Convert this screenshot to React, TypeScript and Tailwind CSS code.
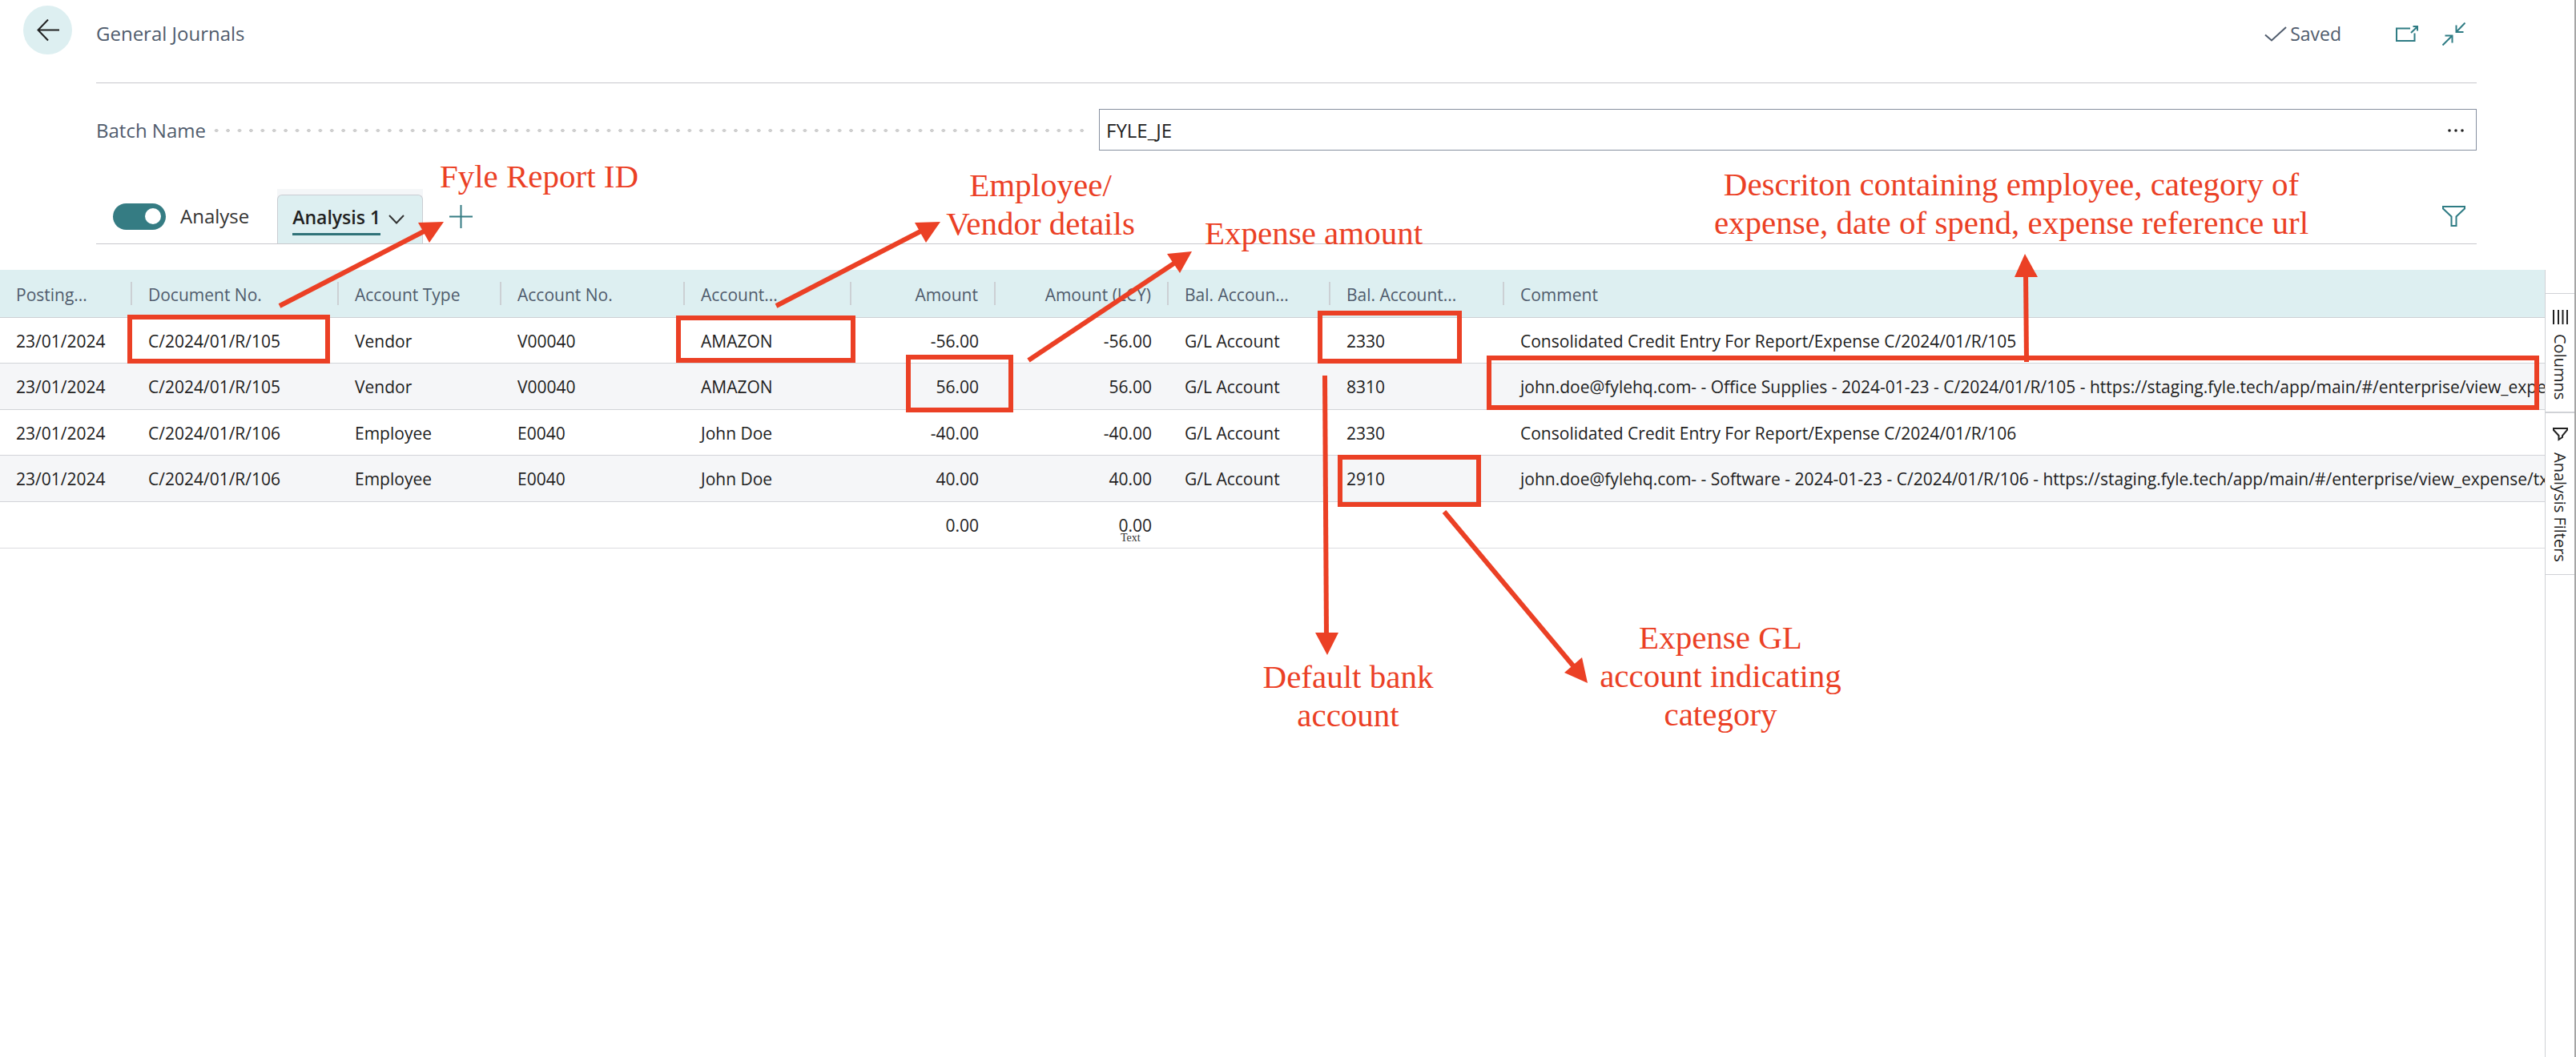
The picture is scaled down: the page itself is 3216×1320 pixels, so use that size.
const COLUMNS = [
  { label: 'Posting...', width: 'w-[165px]', right: false },
  { label: 'Document No.', width: 'w-[258px]', right: false },
  { label: 'Account Type', width: 'w-[203px]', right: false },
  { label: 'Account No.', width: 'w-[229px]', right: false },
  { label: 'Account...', width: 'w-[208px]', right: false },
  { label: 'Amount', width: 'w-[180px]', right: true },
  { label: 'Amount (LCY)', width: 'w-[216px]', right: true },
  { label: 'Bal. Accoun...', width: 'w-[202px]', right: false },
  { label: 'Bal. Account...', width: 'w-[217px]', right: false },
  { label: 'Comment', width: '', right: false },
];

const ROWS = [
  ['23/01/2024', 'C/2024/01/R/105', 'Vendor', 'V00040', 'AMAZON', '-56.00', '-56.00', 'G/L Account', '2330', 'Consolidated Credit Entry For Report/Expense C/2024/01/R/105'],
  ['23/01/2024', 'C/2024/01/R/105', 'Vendor', 'V00040', 'AMAZON', '56.00', '56.00', 'G/L Account', '8310', 'john.doe@fylehq.com- - Office Supplies - 2024-01-23 - C/2024/01/R/105 - https://staging.fyle.tech/app/main/#/enterprise/view_expen'],
  ['23/01/2024', 'C/2024/01/R/106', 'Employee', 'E0040', 'John Doe', '-40.00', '-40.00', 'G/L Account', '2330', 'Consolidated Credit Entry For Report/Expense C/2024/01/R/106'],
  ['23/01/2024', 'C/2024/01/R/106', 'Employee', 'E0040', 'John Doe', '40.00', '40.00', 'G/L Account', '2910', 'john.doe@fylehq.com- - Software - 2024-01-23 - C/2024/01/R/106 - https://staging.fyle.tech/app/main/#/enterprise/view_expense/txv'],
];

const TOTALS = ['', '', '', '', '', '0.00', '0.00', '', '', ''];

function PageHeader() {
  return (
    <div className="flex">
      <div className="w-[120px] shrink-0 pt-[7px] pl-[29px]">
        <button aria-label="Back" className="flex size-[61px] items-center justify-center rounded-full bg-[#ddeff1]">
          <svg width="28" height="28" viewBox="0 0 28 28" fill="none" stroke="#212121" strokeWidth="2">
            <path d="M28 13.500H1.500M14 .5L1.500 13.500L14 26.500" />
          </svg>
        </button>
      </div>
      <header className="mr-[122px] flex h-[104px] flex-1 items-center border-b border-[#c8c8cc] pb-[19px] text-[#505c6d]">
        <h1 className="text-2xl">General Journals</h1>
        <div className="mr-[14px] ml-auto flex items-center">
          <svg className="mr-1" width="28" height="19" viewBox="0 0 28 19" fill="none" stroke="#505c6d" strokeWidth="2">
            <path d="M1 10.5L9 17.5L27 1" />
          </svg>
          <span className="text-[23px]">Saved</span>
          <button aria-label="Open in new window" className="ml-[68px]">
            <svg width="28" height="20" viewBox="0 0 28 20" fill="none" stroke="#2f7c84" strokeWidth="2">
              <path d="M18 3.5H1V19H23.5V9.5M19 9L27 1.2M21.5 1H27V6.5" />
            </svg>
          </button>
          <button aria-label="Collapse" className="ml-[30px]">
            <svg width="29" height="29" viewBox="0 0 29 29" fill="none" stroke="#2f7c84" strokeWidth="2">
              <path d="M28.5 .5L17.5 12M17.5 3.5V12H26.5M.5 28.5L12.5 16.5M3.5 16.5H12.5V25.5" />
            </svg>
          </button>
        </div>
      </header>
    </div>
  );
}

function BatchField() {
  return (
    <div className="mt-8 mr-[122px] ml-[120px] grid grid-cols-[1252fr_1720fr] items-center text-2xl">
      <div className="flex items-center pt-[1px] pr-[13px]">
        <label htmlFor="batch" className="mr-[6px] text-[#505c6d]">Batch Name</label>
        <div className="h-1 flex-1 bg-[radial-gradient(circle,#cfcfcf_2px,transparent_2px)] bg-[length:calc(100%/76)_4px]" />
      </div>
      <div className="flex h-[52px] items-center border border-[#8790a0] pr-[14px] pl-2">
        <input id="batch" defaultValue="FYLE_JE" className="min-w-0 flex-1 pt-[1px] text-[#212121] outline-none" />
        <button aria-label="Choose a value for Batch Name">
          <svg width="22" height="6" viewBox="0 0 22 6" fill="#212121">
            <circle cx="3" cy="4" r="1.8" /><circle cx="11" cy="4" r="1.8" /><circle cx="19" cy="4" r="1.8" />
          </svg>
        </button>
      </div>
    </div>
  );
}

function AnalysisBar() {
  return (
    <div className="mt-12 mr-[122px] ml-[120px] flex h-[69px] items-center border-b border-[#c8c8cc] pl-[21px]">
      <label className="flex items-center gap-[18px] text-2xl text-[#333]">
        <input type="checkbox" defaultChecked className="peer sr-only" />
        <span className="flex h-[33px] w-[66px] items-center justify-end rounded-full bg-[#357c83] pr-[6px]">
          <span className="size-5 rounded-full bg-white" />
        </span>
        Analyse
      </label>
      <div className="ml-[35px] self-stretch bg-[#f4f6f8] pt-[7px]">
        <button className="flex h-[61px] w-[182px] items-center rounded-t-md border border-b-0 border-[#cacdd3] bg-[#ddeff1] pl-[18px]">
          <span className="border-b-[3px] border-[#2f7278] pb-1 text-[23px] leading-8 font-semibold text-[#212121]">Analysis 1</span>
          <svg className="ml-[10px]" width="20" height="12" viewBox="0 0 20 12" fill="none" stroke="#333" strokeWidth="2">
            <path d="M1 1L10 10.5L19 1" />
          </svg>
        </button>
      </div>
      <button aria-label="Add analysis" className="ml-[33px]">
        <svg width="29" height="29" viewBox="0 0 29 29" fill="none" stroke="#357c83" strokeWidth="2">
          <path d="M14.5 0V29M0 14.5H29" />
        </svg>
      </button>
      <button aria-label="Filter" className="mr-[14px] ml-auto">
        <svg width="29" height="26" viewBox="0 0 29 26" fill="none" stroke="#2f7c84" strokeWidth="2">
          <path d="M1 1H28V3.5L17.5 13.5V25H11.5V13.5L1 3.5Z" />
        </svg>
      </button>
    </div>
  );
}

function JournalTable() {
  return (
    <table className="w-full table-fixed border-separate border-spacing-0 text-[21px] whitespace-nowrap text-[#212121]">
      <thead>
        <tr className="h-[60px] bg-[#ddeff1] text-[#505c6d]">
          {COLUMNS.map((c, i) => (
            <th key={i} scope="col" className={`${c.width} border-b border-[#ccd0d4] p-0 font-normal ${c.right ? 'text-right' : 'text-left'}`}>
              <div className={`h-[29px] px-[20px] leading-8 ${i < 9 ? 'border-r-2 border-[#ccd0d4]' : ''}`}>{c.label}</div>
            </th>
          ))}
        </tr>
      </thead>
      <tbody>
        {ROWS.map((row, r) => (
          <tr key={r} className="h-[57px] even:h-[58px] even:bg-[#f5f6f8]">
            {row.map((cell, i) => (
              <td key={i} className={`overflow-hidden border-b border-[#d2d4d8] p-0 pt-[3px] ${COLUMNS[i].right ? 'pr-[21px] text-right' : 'pl-[20px]'}`}>{cell}</td>
            ))}
          </tr>
        ))}
      </tbody>
      <tfoot>
        <tr className="h-[58px]">
          {TOTALS.map((cell, i) => (
            <td key={i} className="border-b border-[#dcdde0] p-0 pt-[3px] pr-[21px] text-right">{cell}</td>
          ))}
        </tr>
      </tfoot>
    </table>
  );
}

function SidePanel() {
  return (
    <aside className="w-[37px] shrink-0 border-l border-[#d0d2d6] pt-[29px] text-xl text-[#212121]">
      <button className="flex h-[148px] w-full flex-col items-center gap-3 border-t border-[#d0d2d6] pt-5">
        <svg width="19" height="18" viewBox="0 0 19 18" fill="none" stroke="#212121" strokeWidth="2">
          <path d="M1 0V18M7 0V18M12.500 0V18M18 0V18" />
        </svg>
        <span className="[writing-mode:vertical-rl]">Columns</span>
      </button>
      <button className="flex h-[204px] w-full flex-col items-center gap-[14px] border-t-2 border-b border-[#d0d2d6] pt-[18px]">
        <svg width="19" height="17" viewBox="0 0 19 17" fill="none" stroke="#212121" strokeWidth="2">
          <path d="M1 1H18V3L12 10V12L7.500 15V10L1 3Z" />
        </svg>
        <span className="[writing-mode:vertical-rl]">Analysis Filters</span>
      </button>
    </aside>
  );
}

function Annotations() {
  const note = 'absolute w-max -translate-x-1/2 text-center text-[41px] leading-[48px]';
  const box = 'absolute border-[6px] border-[#eb4025]';
  return (
    <div className="pointer-events-none absolute inset-0 overflow-hidden font-['Liberation_Serif',serif] text-[#eb4025]">
      <div className={`${box} top-[393px] left-[159px] h-[61px] w-[253px]`} />
      <div className={`${box} top-[394px] left-[844px] h-[59px] w-[224px]`} />
      <div className={`${box} top-[443px] left-[1131px] h-[72px] w-[134px]`} />
      <div className={`${box} top-[388px] left-[1645px] h-[66px] w-[180px]`} />
      <div className={`${box} top-[444px] left-[1856px] h-[68px] w-[1314px]`} />
      <div className={`${box} top-[568px] left-[1670px] h-[65px] w-[179px]`} />

      <svg className="absolute top-0 left-0" width="3216" height="1320" viewBox="0 0 3216 1320" fill="#eb4025" stroke="#eb4025">
        <g strokeWidth="6">
          <path d="M349 382L533 287" />
          <path d="M969 382L1153 287" />
          <path d="M1284 450L1470 326" />
          <path d="M2530 452L2529 340" />
          <path d="M1654 469L1656 795" />
          <path d="M1803 639L1967 835" />
        </g>
        <g stroke="none">
          <path d="M554 277L522 278L536 303Z" />
          <path d="M1174 277L1142 278L1156 303Z" />
          <path d="M1488 314L1457 317L1473 341Z" />
          <path d="M2528 317L2515 346L2544 346Z" />
          <path d="M1657 818L1642 790L1671 790Z" />
          <path d="M1982 853L1953 840L1975 821Z" />
        </g>
      </svg>

      <p className={`${note} top-[196px] left-[673px]`}>Fyle Report ID</p>
      <p className={`${note} top-[207px] left-[1299px]`}>Employee/<br />Vendor details</p>
      <p className={`${note} top-[267px] left-[1640px]`}>Expense amount</p>
      <p className={`${note} top-[206px] left-[2511px]`}>Descriton containing employee, category of<br />expense, date of spend, expense reference url</p>
      <p className={`${note} top-[821px] left-[1683px]`}>Default bank<br />account</p>
      <p className={`${note} top-[772px] left-[2148px]`}>Expense GL<br />account indicating<br />category</p>
      <p className="absolute top-[664px] left-[1399px] text-sm leading-4 text-[#333]">Text</p>
    </div>
  );
}

export default function App() {
  return (
    <div className="relative flex min-h-screen flex-col border-r-2 border-[#a6a6a6] bg-white font-['Open_Sans','Noto_Sans',sans-serif]">
      <PageHeader />
      <BatchField />
      <AnalysisBar />
      <main className="mt-8 flex flex-1">
        <div className="min-w-0 flex-1 overflow-hidden">
          <JournalTable />
        </div>
        <SidePanel />
      </main>
      <Annotations />
    </div>
  );
}
